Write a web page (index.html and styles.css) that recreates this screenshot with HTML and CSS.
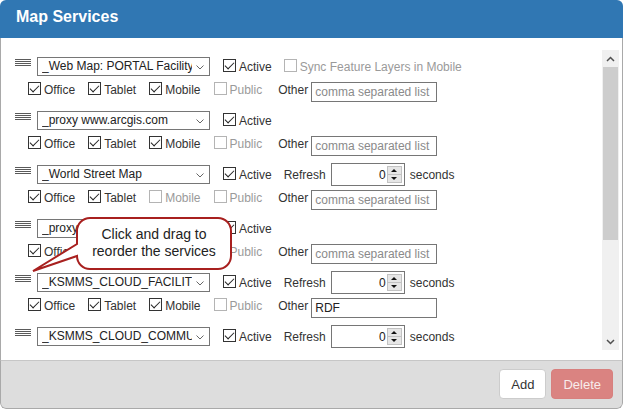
FILE: index.html
```html
<!DOCTYPE html>
<html>
<head>
    <meta charset="utf-8">
    <link rel="stylesheet" href="styles.css">
</head>
<body>
<div class="panel">
    <div class="panel-heading">Map Services</div>

    <div class="panel-body">
        <div class="service-list">

            <div class="service">
                <div class="line">
                    <span class="handle"><svg width="16" height="7" viewBox="0 0 16 7"><path d="M0 0.5H16M0 2.5H16M0 4.5H16M0 6.5H16" stroke="#5a5a5a" stroke-width="1"/></svg></span>
                    <span class="pick">
                        <select class="layer"><option>_Web Map: PORTAL Facility</option></select>
                        <svg class="caret" width="8" height="5" viewBox="0 0 8 5"><path d="M0.5 0.5L4 4L7.5 0.5" fill="none" stroke="#666" stroke-width="1"/></svg>
                    </span>
                    <label class="opt active"><input type="checkbox" checked>Active</label>
                    <label class="opt off"><input type="checkbox" disabled>Sync Feature Layers in Mobile</label>
                </div>
                <div class="line sub">
                    <label class="opt"><input type="checkbox" checked>Office</label>
                    <label class="opt"><input type="checkbox" checked>Tablet</label>
                    <label class="opt"><input type="checkbox" checked>Mobile</label>
                    <label class="opt off"><input type="checkbox" disabled>Public</label>
                    <span class="other-label">Other</span>
                    <input class="other" type="text" placeholder="comma separated list">
                </div>
            </div>

            <div class="service">
                <div class="line">
                    <span class="handle"><svg width="16" height="7" viewBox="0 0 16 7"><path d="M0 0.5H16M0 2.5H16M0 4.5H16M0 6.5H16" stroke="#5a5a5a" stroke-width="1"/></svg></span>
                    <span class="pick">
                        <select class="layer"><option>_proxy www.arcgis.com</option></select>
                        <svg class="caret" width="8" height="5" viewBox="0 0 8 5"><path d="M0.5 0.5L4 4L7.5 0.5" fill="none" stroke="#666" stroke-width="1"/></svg>
                    </span>
                    <label class="opt active"><input type="checkbox" checked>Active</label>
                </div>
                <div class="line sub">
                    <label class="opt"><input type="checkbox" checked>Office</label>
                    <label class="opt"><input type="checkbox" checked>Tablet</label>
                    <label class="opt"><input type="checkbox" checked>Mobile</label>
                    <label class="opt off"><input type="checkbox" disabled>Public</label>
                    <span class="other-label">Other</span>
                    <input class="other" type="text" placeholder="comma separated list">
                </div>
            </div>

            <div class="service">
                <div class="line">
                    <span class="handle"><svg width="16" height="7" viewBox="0 0 16 7"><path d="M0 0.5H16M0 2.5H16M0 4.5H16M0 6.5H16" stroke="#5a5a5a" stroke-width="1"/></svg></span>
                    <span class="pick">
                        <select class="layer"><option>_World Street Map</option></select>
                        <svg class="caret" width="8" height="5" viewBox="0 0 8 5"><path d="M0.5 0.5L4 4L7.5 0.5" fill="none" stroke="#666" stroke-width="1"/></svg>
                    </span>
                    <label class="opt active"><input type="checkbox" checked>Active</label>
                    <span class="refresh-label">Refresh</span>
                    <span class="spin">
                        <input type="text" value="0">
                        <span class="arrows"><span class="up"></span><span class="down"></span></span>
                    </span>
                    <span class="seconds">seconds</span>
                </div>
                <div class="line sub">
                    <label class="opt"><input type="checkbox" checked>Office</label>
                    <label class="opt"><input type="checkbox" checked>Tablet</label>
                    <label class="opt off"><input type="checkbox" disabled>Mobile</label>
                    <label class="opt off"><input type="checkbox" disabled>Public</label>
                    <span class="other-label">Other</span>
                    <input class="other" type="text" placeholder="comma separated list">
                </div>
            </div>

            <div class="service">
                <div class="line">
                    <span class="handle"><svg width="16" height="7" viewBox="0 0 16 7"><path d="M0 0.5H16M0 2.5H16M0 4.5H16M0 6.5H16" stroke="#5a5a5a" stroke-width="1"/></svg></span>
                    <span class="pick">
                        <select class="layer"><option>_proxy services.arcgis.com</option></select>
                        <svg class="caret" width="8" height="5" viewBox="0 0 8 5"><path d="M0.5 0.5L4 4L7.5 0.5" fill="none" stroke="#666" stroke-width="1"/></svg>
                    </span>
                    <label class="opt active"><input type="checkbox" checked>Active</label>
                </div>
                <div class="line sub">
                    <label class="opt"><input type="checkbox" checked>Office</label>
                    <label class="opt"><input type="checkbox" checked>Tablet</label>
                    <label class="opt"><input type="checkbox" checked>Mobile</label>
                    <label class="opt off"><input type="checkbox" disabled>Public</label>
                    <span class="other-label">Other</span>
                    <input class="other" type="text" placeholder="comma separated list">
                </div>
            </div>

            <div class="service">
                <div class="line">
                    <span class="handle"><svg width="16" height="7" viewBox="0 0 16 7"><path d="M0 0.5H16M0 2.5H16M0 4.5H16M0 6.5H16" stroke="#5a5a5a" stroke-width="1"/></svg></span>
                    <span class="pick">
                        <select class="layer"><option>_KSMMS_CLOUD_FACILITIES</option></select>
                        <svg class="caret" width="8" height="5" viewBox="0 0 8 5"><path d="M0.5 0.5L4 4L7.5 0.5" fill="none" stroke="#666" stroke-width="1"/></svg>
                    </span>
                    <label class="opt active"><input type="checkbox" checked>Active</label>
                    <span class="refresh-label">Refresh</span>
                    <span class="spin">
                        <input type="text" value="0">
                        <span class="arrows"><span class="up"></span><span class="down"></span></span>
                    </span>
                    <span class="seconds">seconds</span>
                </div>
                <div class="line sub">
                    <label class="opt"><input type="checkbox" checked>Office</label>
                    <label class="opt"><input type="checkbox" checked>Tablet</label>
                    <label class="opt"><input type="checkbox" checked>Mobile</label>
                    <label class="opt off"><input type="checkbox" disabled>Public</label>
                    <span class="other-label">Other</span>
                    <input class="other" type="text" value="RDF" placeholder="comma separated list">
                </div>
            </div>

            <div class="service">
                <div class="line">
                    <span class="handle"><svg width="16" height="7" viewBox="0 0 16 7"><path d="M0 0.5H16M0 2.5H16M0 4.5H16M0 6.5H16" stroke="#5a5a5a" stroke-width="1"/></svg></span>
                    <span class="pick">
                        <select class="layer"><option>_KSMMS_CLOUD_COMMUNITY</option></select>
                        <svg class="caret" width="8" height="5" viewBox="0 0 8 5"><path d="M0.5 0.5L4 4L7.5 0.5" fill="none" stroke="#666" stroke-width="1"/></svg>
                    </span>
                    <label class="opt active"><input type="checkbox" checked>Active</label>
                    <span class="refresh-label">Refresh</span>
                    <span class="spin">
                        <input type="text" value="0">
                        <span class="arrows"><span class="up"></span><span class="down"></span></span>
                    </span>
                    <span class="seconds">seconds</span>
                </div>
            </div>

        </div>

        <div class="scrollbar">
            <span class="sb-btn"><svg width="9" height="6" viewBox="0 0 9 6"><path d="M1 5L4.5 1.5L8 5" fill="none" stroke="#505050" stroke-width="1.5"/></svg></span>
            <span class="sb-thumb"></span>
            <span class="sb-track"></span>
            <span class="sb-btn"><svg width="9" height="6" viewBox="0 0 9 6"><path d="M1 1L4.5 4.5L8 1" fill="none" stroke="#505050" stroke-width="1.5"/></svg></span>
        </div>
    </div>

    <div class="panel-footer">
        <button class="btn btn-add">Add</button>
        <button class="btn btn-delete" disabled>Delete</button>
    </div>

    <!-- hint bubble pointing at the drag handle -->
    <div class="drag-tip">
        <svg width="202" height="58" viewBox="0 0 202 58">
            <path d="M59 2H187A13 13 0 0 1 200 15V40A13 13 0 0 1 187 53H59A13 13 0 0 1 46 40L2 55L46 28V15A13 13 0 0 1 59 2Z" fill="#fff" stroke="#a8201f" stroke-width="2"/>
        </svg>
        <span class="tip-text">Click and drag to<br>reorder the services</span>
    </div>
</div>
</body>
</html>
```

FILE: styles.css
```css
html, body {
    margin: 0;
    padding: 0;
}

body {
    font-family: "Liberation Sans", Arial, sans-serif;
    font-size: 12px;
    color: #333;
    background-color: #fff;
}

.panel {
    position: relative;
    width: 623px;
    height: 409px;
    border-radius: 6px;
    overflow: hidden;
    display: flex;
    flex-direction: column;
}

.panel-heading {
    flex: none;
    height: 38px;
    box-sizing: border-box;
    padding: 5px 16px 0;
    line-height: 24px;
    background-color: #3077b3;
    color: #fff;
    font-size: 16px;
    font-weight: bold;
}

.panel-body {
    flex: none;
    height: 322px;
    box-sizing: border-box;
    display: flex;
    padding: 12px 3px 10px 0;
    border-left: 1px solid #a9a9a9;
    border-right: 1px solid #a9a9a9;
    background-color: #fff;
}

.service-list {
    flex: 1;
    height: 300px;
    overflow: hidden;
    padding-top: 5px;
    box-sizing: border-box;
}

.service {
    padding-left: 14px;
    margin-bottom: 8px;
}

.line {
    display: flex;
    align-items: center;
    height: 23px;
    white-space: nowrap;
}

.line.sub {
    padding-left: 13px;
}

.handle {
    display: flex;
    margin: 0 6px 8px 0;
}

.pick {
    position: relative;
    display: flex;
    margin-right: 13px;
}

.layer {
    appearance: none;
    -webkit-appearance: none;
    width: 173px;
    height: 19px;
    box-sizing: border-box;
    margin: 0;
    padding: 1px 17px 1px 4px;
    border: 1px solid #767676;
    border-radius: 0;
    background-color: #fff;
    color: #222;
    font-family: inherit;
    font-size: 12px;
    line-height: 15px;
}

.caret {
    position: absolute;
    right: 6px;
    top: 8px;
}

.opt {
    display: flex;
    align-items: center;
    margin-right: 13px;
    color: #333;
}

.opt.active {
    margin-right: 12px;
}

.opt input {
    appearance: none;
    -webkit-appearance: none;
    position: relative;
    width: 13px;
    height: 13px;
    margin: 0 3px 3px 0;
    border: 1px solid #333;
    border-radius: 0;
    background-color: #fff;
}

.opt input:checked::after {
    content: "";
    position: absolute;
    left: 3px;
    top: 0px;
    width: 4px;
    height: 8px;
    border: solid #222;
    border-width: 0 1px 1px 0;
    transform: rotate(45deg);
}

.opt.off {
    color: #9a9a9a;
}

.opt.off input {
    border-color: #b4b4b4;
}

.other-label {
    margin: 0 3px 0 3px;
}

.other {
    width: 126px;
    height: 20px;
    box-sizing: border-box;
    margin: 4px 0 -1px 0;
    padding: 0 3px;
    border: 1px solid #767676;
    border-radius: 0;
    font-family: inherit;
    font-size: 12px;
    color: #222;
    outline: none;
}

.other::placeholder {
    color: #8a8a8a;
}

.refresh-label {
    margin-right: 5px;
}

.spin {
    display: flex;
    align-items: center;
    width: 74px;
    height: 23px;
    box-sizing: border-box;
    border: 1px solid #767676;
    margin-right: 5px;
}

.spin input {
    flex: 1;
    min-width: 0;
    border: none;
    padding: 0 1px 0 0;
    margin: 0;
    text-align: right;
    font-family: inherit;
    font-size: 12px;
    color: #222;
    outline: none;
    background: transparent;
}

.arrows {
    display: flex;
    flex-direction: column;
    width: 15px;
    height: 17px;
    margin-right: 2px;
    box-sizing: border-box;
    border: 1px solid #c2c2c2;
    background-color: #e6e6e6;
}

.arrows span {
    flex: 1;
    display: flex;
    align-items: center;
    justify-content: center;
}

.arrows .up {
    border-bottom: 1px solid #c2c2c2;
}

.arrows .up::before {
    content: "";
    border-left: 3px solid transparent;
    border-right: 3px solid transparent;
    border-bottom: 3px solid #111;
}

.arrows .down::before {
    content: "";
    border-left: 3px solid transparent;
    border-right: 3px solid transparent;
    border-top: 3px solid #111;
}

.scrollbar {
    width: 17px;
    height: 300px;
    display: flex;
    flex-direction: column;
    background-color: #f0f0f0;
}

.sb-btn {
    height: 17px;
    display: flex;
    align-items: center;
    justify-content: center;
}

.sb-thumb {
    height: 173px;
    margin: 0 1px;
    background-color: #cdcdcd;
}

.sb-track {
    flex: 1;
}

.panel-footer {
    flex: 1;
    display: flex;
    justify-content: flex-end;
    align-items: flex-start;
    gap: 5px;
    padding: 8px 9px 0 0;
    border: 1px solid #a9a9a9;
    border-top-color: #c6c6c6;
    border-radius: 0 0 6px 6px;
    background-color: #dddddd;
}

.btn {
    height: 30px;
    padding: 0 11px;
    font-family: inherit;
    font-size: 13px;
    border-radius: 4px;
    cursor: pointer;
}

.btn-add {
    background-color: #fff;
    border: 1px solid #ccc;
    color: #333;
}

.btn-delete {
    background-color: #da8381;
    border: 1px solid #d7807e;
    color: #f8eceb;
    cursor: default;
}

.drag-tip {
    position: absolute;
    left: 31px;
    top: 216px;
    width: 202px;
    height: 58px;
}

.drag-tip svg {
    display: block;
}

.tip-text {
    position: absolute;
    left: 46px;
    width: 154px;
    top: 10px;
    text-align: center;
    font-size: 14px;
    line-height: 17px;
    color: #222;
}
```
